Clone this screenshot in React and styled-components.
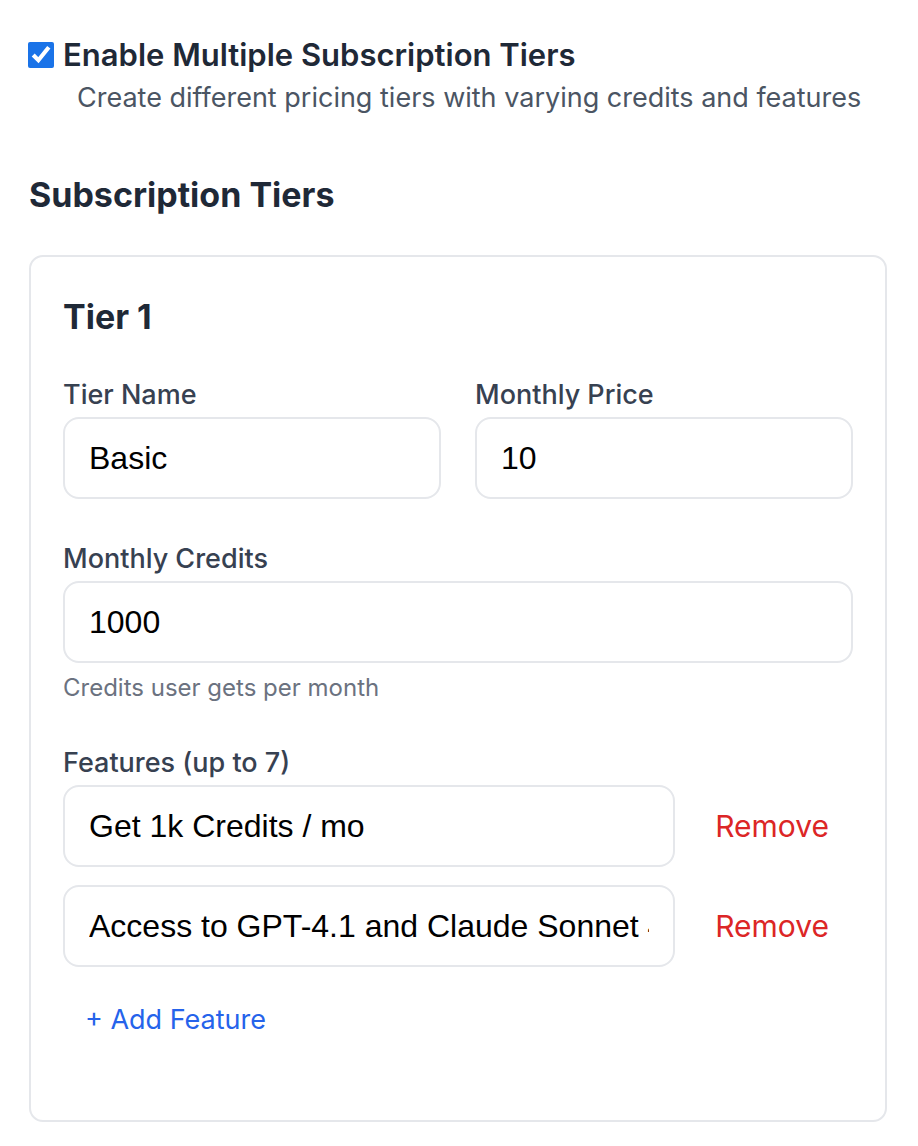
import React from 'react';
import styled, { createGlobalStyle } from 'styled-components';

const GlobalStyle = createGlobalStyle`
  body {
    margin: 0;
    background: #ffffff;
    font-family: Inter, "Noto Sans", sans-serif;
  }
`;

const Page = styled.main`
  padding: 35px 31px 0 29px;
`;

const ToggleRow = styled.label`
  display: flex;
  align-items: center;
  gap: 9px;
  margin-left: -1px;
`;

const Checkbox = styled.input`
  width: 26px;
  height: 26px;
  margin: 0;
  accent-color: #1a73e8;
`;

const ToggleTitle = styled.span`
  font-size: 31px;
  line-height: 40px;
  font-weight: 600;
  color: #1f2937;
`;

const ToggleCaption = styled.p`
  margin: 5px 0 0 48px;
  font-size: 27px;
  line-height: 36px;
  color: #4b5563;
`;

const SectionHeading = styled.h2`
  margin: 55px 0 36px;
  font-size: 34px;
  line-height: 48px;
  font-weight: 700;
  color: #1f2937;
`;

const TierCard = styled.section`
  border: 2px solid #e5e7eb;
  border-radius: 14px;
  padding: 32px 32px 80px;
`;

const TierTitle = styled.h3`
  margin: 0 0 32px;
  font-size: 34px;
  line-height: 56px;
  font-weight: 700;
  color: #1f2937;
`;

const FieldGrid = styled.div`
  display: grid;
  grid-template-columns: ${p => (p.$cols === 2 ? '1fr 1fr' : '1fr')};
  column-gap: 34px;
  margin-bottom: 42px;
`;

const Field = styled.div`
  display: flex;
  flex-direction: column;
`;

const Label = styled.label`
  font-size: 27px;
  line-height: 36px;
  font-weight: 500;
  color: #374151;
  margin-bottom: 4px;
`;

const TextInput = styled.input`
  box-sizing: border-box;
  width: 100%;
  min-width: 0;
  height: 82px;
  padding: 0 24px;
  border: 2px solid #e5e7eb;
  border-radius: 16px;
  background: #ffffff;
  font-family: "Liberation Sans", Arial, sans-serif;
  font-size: 32px;
  color: #000000;
  outline: none;
`;

const Helper = styled.p`
  margin: 10px 0 0;
  font-size: 24px;
  line-height: 30px;
  color: #6b7280;
`;

const FeatureList = styled.div`
  display: flex;
  flex-direction: column;
  gap: 18px;
`;

const FeatureRow = styled.div`
  display: flex;
  align-items: center;
  gap: 16px;
`;

const LinkButton = styled.button`
  background: none;
  border: none;
  padding: 0 24px;
  font-family: Inter, "Noto Sans", sans-serif;
  font-size: ${p => (p.$danger ? '30px' : '27px')};
  line-height: 40px;
  color: ${p => (p.$danger ? '#dc2626' : '#2563eb')};
  cursor: pointer;
  flex-shrink: 0;
`;

const AddRow = styled.div`
  margin-top: 33px;
  margin-left: -2px;
`;

const features = ['Get 1k Credits / mo', 'Access to GPT-4.1 and Claude Sonnet 4'];

export default function App() {
  return (
    <>
      <GlobalStyle />
      <Page>
        <ToggleRow>
          <Checkbox type="checkbox" defaultChecked />
          <ToggleTitle>Enable Multiple Subscription Tiers</ToggleTitle>
        </ToggleRow>
        <ToggleCaption>
          Create different pricing tiers with varying credits and features
        </ToggleCaption>

        <SectionHeading>Subscription Tiers</SectionHeading>

        <TierCard>
          <TierTitle>Tier 1</TierTitle>
          <FieldGrid $cols={2}>
            <Field>
              <Label>Tier Name</Label>
              <TextInput defaultValue="Basic" />
            </Field>
            <Field>
              <Label>Monthly Price</Label>
              <TextInput defaultValue="10" />
            </Field>
          </FieldGrid>
          <FieldGrid>
            <Field>
              <Label>Monthly Credits</Label>
              <TextInput defaultValue="1000" />
              <Helper>Credits user gets per month</Helper>
            </Field>
          </FieldGrid>
          <Field>
            <Label>Features (up to 7)</Label>
            <FeatureList>
              {features.map(f => (
                <FeatureRow key={f}>
                  <TextInput defaultValue={f} />
                  <LinkButton $danger>Remove</LinkButton>
                </FeatureRow>
              ))}
            </FeatureList>
          </Field>
          <AddRow>
            <LinkButton>+ Add Feature</LinkButton>
          </AddRow>
        </TierCard>
      </Page>
    </>
  );
}
